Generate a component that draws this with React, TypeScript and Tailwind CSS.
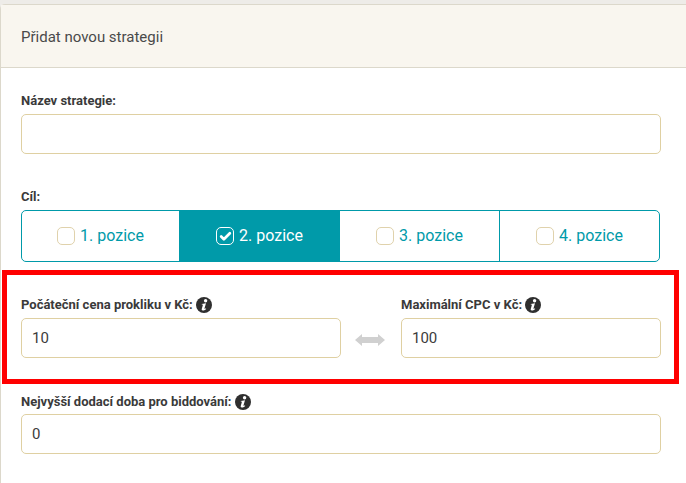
import { Check } from 'lucide-react';

const goals = ['1. pozice', '2. pozice', '3. pozice', '4. pozice'];

function InfoIcon() {
  return (
    <svg viewBox="0 0 16 16" className="ml-[3px] h-4 w-4 shrink-0">
      <circle cx="8" cy="8" r="8" fill="#2f2f2f" />
      <circle cx="9.6" cy="3.7" r="1.7" fill="#fff" />
      <path
        d="M5.8 6.9 L10 6.2 L8.5 11.2 C8.3 11.9 8.8 11.9 9.9 11.2 L10.2 11.9 C9 13 7.8 13.5 6.8 13.5 C5.8 13.4 5.5 12.7 5.8 11.7 L6.8 8.3 C7 7.7 6.6 7.6 5.7 7.6 Z"
        fill="#fff"
      />
    </svg>
  );
}

function Field({ label, value, info, className, tight }: { label: string; value?: string; info?: boolean; className?: string; tight?: boolean }) {
  return (
    <div className={className}>
      <label className="flex h-4 items-center text-[13px] font-bold leading-4 text-[#3a3a3a]">
        {label}
        {info && <InfoIcon />}
      </label>
      <input
        readOnly
        value={value ?? ''}
        className={`${tight ? 'mt-1' : 'mt-[5px]'} block h-10 w-full rounded-[5px] border border-[#dfd0a2] bg-white px-[10px] text-[15px] text-[#3c3c3c] outline-none`}
      />
    </div>
  );
}

export default function App() {
  return (
    <div className="relative h-[483px] w-[686px] overflow-hidden bg-[#eeece8] pt-1 font-['Roboto',sans-serif]">
      <div className="h-full rounded-tl-[5px] border-l border-t border-[#dcd8cb] bg-white">
        <div className="flex h-[63px] items-center border-b border-[#dcd8cb] bg-[#f9f6ef] px-5 pt-[3px] text-[15px] text-[#4a4a4a]">
          Přidat novou strategii
        </div>

        <div className="pl-5 pr-[25px]">
          <div className="pt-[25px]">
            <Field label="Název strategie:" />
          </div>

          <div className="pt-[35px]">
            <div className="text-[13px] font-bold leading-4 text-[#3a3a3a]">Cíl:</div>
            <div className="mt-[5px] flex h-[52px] w-[639px] overflow-hidden rounded-[5px] border border-[#009aa9]">
              {goals.map((goal, i) => (
                <div
                  key={goal}
                  className={`flex w-[160px] items-center justify-center gap-[5px] border-l text-[16px] first:w-[157px] first:border-l-0 ${
                    i === 1
                      ? 'border-[#009aa9] bg-[#009aa9] text-white'
                      : 'border-[#009aa9] text-[#009aa9]'
                  }`}
                >
                  <span
                    className={`flex h-[18px] w-[18px] items-center justify-center rounded-[5px] border ${
                      i === 1 ? 'border-white' : 'border-[#e0d2ac]'
                    }`}
                  >
                    {i === 1 && <Check size={13} strokeWidth={5} color="#fff" />}
                  </span>
                  {goal}
                </div>
              ))}
            </div>
          </div>

          <div className="flex items-end pt-[35px]">
            <Field className="w-[320px]" label="Počáteční cena prokliku v Kč:" value="10" info />
            <div className="flex h-10 w-[60px] shrink-0 items-center justify-center pr-[2px] pt-1">
              <svg viewBox="0 0 30 12" className="h-3 w-[30px]">
                <path d="M0 6 L7 0 V3 H23 V0 L30 6 L23 12 V9 H7 V12 Z" fill="#d0d0d0" />
              </svg>
            </div>
            <Field className="w-[260px]" label="Maximální CPC v Kč:" value="100" info />
          </div>

          <div className="pt-9">
            <Field tight label="Nejvyšší dodací doba pro biddování:" value="0" info />
          </div>
        </div>
      </div>

      <div className="absolute left-[2px] top-[270px] h-[114px] w-[677px] border-[5px] border-[#ff0000]" />
    </div>
  );
}
